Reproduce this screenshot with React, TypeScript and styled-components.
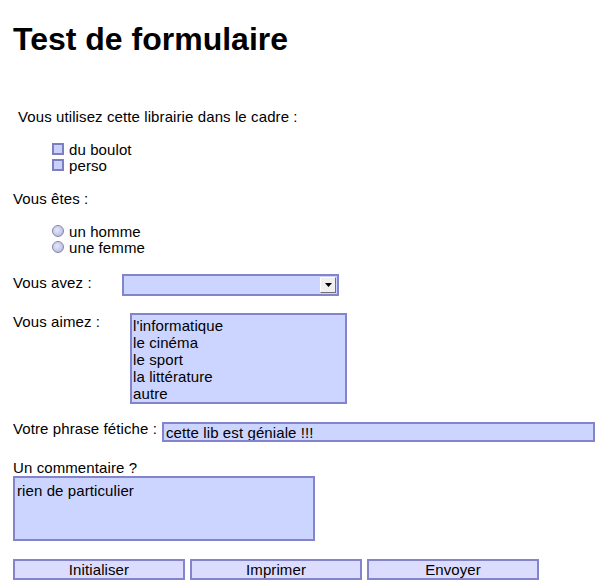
import React from 'react';
import styled, { createGlobalStyle } from 'styled-components';

const GlobalStyle = createGlobalStyle`
    body {
        margin: 0;
        background: #ffffff;
        color: #000000;
        font-family: "Liberation Sans", Arial, sans-serif;
        font-size: 15px;
        letter-spacing: 0.1px;
    }
`;

const FIELD_BG = '#ccd5ff';
const FIELD_BORDER = '#8484cc';

const Page = styled.form`
    display: flex;
    flex-direction: column;
    padding: 0 13px;
    line-height: 17px;
`;

const Title = styled.h1`
    margin: 21px 0 0;
    font-size: 32px;
    line-height: 37px;
    font-weight: bold;
    letter-spacing: 0;
`;

const Label = styled.div<{ $top: number; $indent?: number }>`
    margin-top: ${p => p.$top}px;
    padding-left: ${p => p.$indent ?? 0}px;
    line-height: 17px;
    white-space: pre;
`;

const ChoiceList = styled.div<{ $top: number }>`
    display: flex;
    flex-direction: column;
    margin-top: ${p => p.$top}px;
    padding-left: 39px;
`;

const Choice = styled.label`
    display: flex;
    align-items: center;
    gap: 5px;
    height: 16px;
`;

const CheckBox = styled.input`
    appearance: none;
    margin: 0;
    width: 12px;
    height: 12px;
    box-sizing: border-box;
    border: 2px solid #7e7ec2;
    background: #c9d1f6;
`;

const Radio = styled.input`
    appearance: none;
    margin: 0;
    width: 12px;
    height: 12px;
    box-sizing: border-box;
    border-radius: 50%;
    border: 1px solid #8484a4;
    background: radial-gradient(circle at 40% 40%, #e4e8fa 0%, #c2c8ea 60%, #a9aed6 100%);
`;

const Row = styled.div<{ $top: number }>`
    display: flex;
    align-items: flex-start;
    margin-top: ${p => p.$top}px;
`;

const RowLabel = styled.span<{ $width: number }>`
    width: ${p => p.$width}px;
    flex: none;
`;

const DropDown = styled.div`
    position: relative;
    flex: none;
    width: 217px;
    height: 22px;
    box-sizing: border-box;
    border: 2px solid ${FIELD_BORDER};
    background: ${FIELD_BG};
`;

const DropButton = styled.span`
    position: absolute;
    top: 1px;
    right: 1px;
    width: 16px;
    height: 16px;
    box-sizing: border-box;
    display: flex;
    align-items: center;
    justify-content: center;
    background: #f0f0f0;
    border-top: 1px solid #ffffff;
    border-left: 1px solid #ffffff;
    border-right: 1px solid #707070;
    border-bottom: 1px solid #707070;
`;

const ListBox = styled.div`
    display: flex;
    flex: none;
    flex-direction: column;
    width: 217px;
    height: 91px;
    box-sizing: border-box;
    padding: 2px 1px 0;
    border: 2px solid ${FIELD_BORDER};
    background: ${FIELD_BG};
`;

const ListItem = styled.div`
    height: 17.3px;
    line-height: 17px;
`;

const TextInput = styled.input`
    flex: none;
    width: 433px;
    margin: 2px 0 0;
    height: 20px;
    box-sizing: border-box;
    padding: 0 2px;
    border: 2px solid ${FIELD_BORDER};
    background: ${FIELD_BG};
    font: inherit;
    letter-spacing: inherit;
    color: #000000;
    outline: none;
`;

const TextArea = styled.textarea`
    width: 302px;
    height: 65px;
    box-sizing: border-box;
    margin: 0;
    padding: 4px 2px;
    border: 2px solid ${FIELD_BORDER};
    background: ${FIELD_BG};
    font: inherit;
    letter-spacing: inherit;
    line-height: 17px;
    color: #000000;
    resize: none;
    outline: none;
`;

const ButtonBar = styled.div`
    display: flex;
    gap: 5px;
    margin-top: 18px;
`;

const Button = styled.button`
    width: 172px;
    height: 21px;
    margin: 0;
    padding: 0;
    box-sizing: border-box;
    border: 2px solid ${FIELD_BORDER};
    background: #dcdcfe;
    font: inherit;
    letter-spacing: inherit;
    line-height: 17px;
    color: #000000;
`;

const interests = ["l'informatique", 'le cinéma', 'le sport', 'la littérature', 'autre'];

export default function App(): React.JSX.Element {
    return <>
        <GlobalStyle />
        <Page onSubmit={e => e.preventDefault()}>
            <Title>Test de formulaire</Title>

            <Label $top={50} $indent={5}>Vous utilisez cette librairie dans le cadre :</Label>
            <ChoiceList $top={16}>
                <Choice><CheckBox type='checkbox' />du boulot</Choice>
                <Choice><CheckBox type='checkbox' />perso</Choice>
            </ChoiceList>

            <Label $top={17}>Vous êtes :</Label>
            <ChoiceList $top={16}>
                <Choice><Radio type='radio' name='sexe' />un homme</Choice>
                <Choice><Radio type='radio' name='sexe' />une femme</Choice>
            </ChoiceList>

            <Row $top={19}>
                <RowLabel $width={109}>Vous avez :</RowLabel>
                <DropDown>
                    <DropButton>
                        <svg width='7' height='4' viewBox='0 0 7 4'>
                            <path d='M0 0h7L3.5 4z' fill='#000' />
                        </svg>
                    </DropButton>
                </DropDown>
            </Row>

            <Row $top={17}>
                <RowLabel $width={117}>Vous aimez :</RowLabel>
                <ListBox>
                    {interests.map((n, i) =>
                        <ListItem key={`interest-${i}`}>{n}</ListItem>
                    )}
                </ListBox>
            </Row>

            <Row $top={16}>
                <RowLabel $width={149}>Votre phrase fétiche :</RowLabel>
                <TextInput defaultValue='cette lib est géniale !!!' />
            </Row>

            <Label $top={17}>Un commentaire ?</Label>
            <TextArea defaultValue='rien de particulier' />

            <ButtonBar>
                <Button type='reset'>Initialiser</Button>
                <Button type='button'>Imprimer</Button>
                <Button type='submit'>Envoyer</Button>
            </ButtonBar>
        </Page>
    </>;
}
